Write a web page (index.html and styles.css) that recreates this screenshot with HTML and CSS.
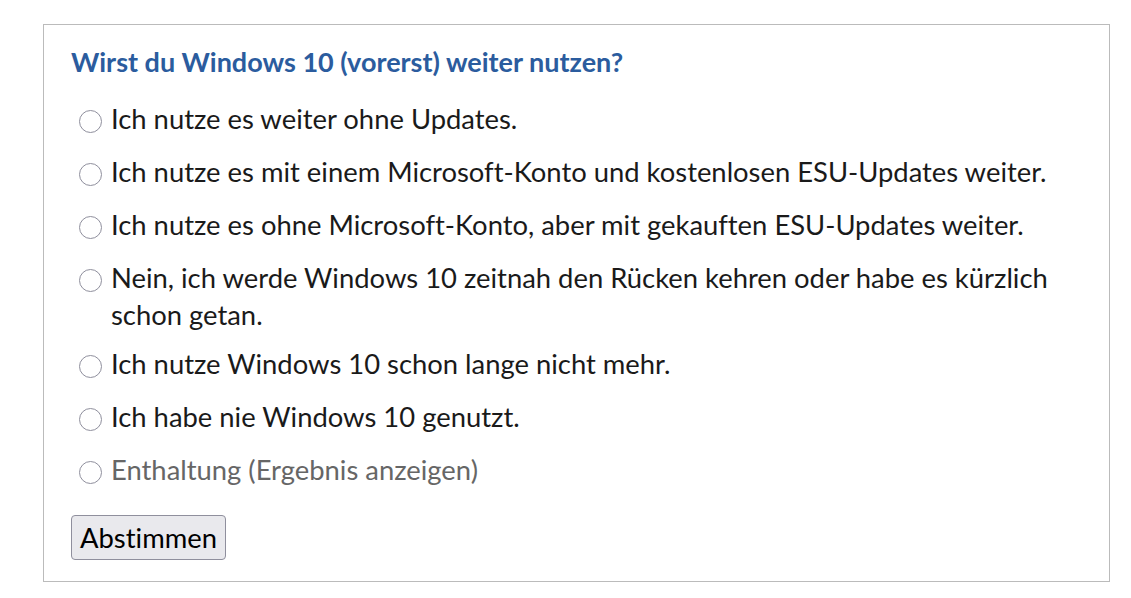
FILE: index.html
```html
<!DOCTYPE html>
<html lang="de">
<head>
<meta charset="utf-8">
<title>Umfrage</title>
<link rel="stylesheet" href="styles.css">
</head>
<body>
<form class="poll">
  <h2 class="poll-title">Wirst du Windows 10 (vorerst) weiter nutzen?</h2>
  <ul class="poll-options">
    <li><label class="option"><input type="radio" name="a" class="radio"><span>Ich nutze es weiter ohne Updates.</span></label></li>
    <li><label class="option"><input type="radio" name="a" class="radio"><span>Ich nutze es mit einem Microsoft-Konto und kostenlosen ESU-Updates weiter.</span></label></li>
    <li><label class="option"><input type="radio" name="a" class="radio"><span>Ich nutze es ohne Microsoft-Konto, aber mit gekauften ESU-Updates weiter.</span></label></li>
    <li><label class="option"><input type="radio" name="a" class="radio"><span>Nein, ich werde Windows 10 zeitnah den Rücken kehren oder habe es kürzlich schon getan.</span></label></li>
    <li><label class="option"><input type="radio" name="a" class="radio"><span>Ich nutze Windows 10 schon lange nicht mehr.</span></label></li>
    <li><label class="option"><input type="radio" name="a" class="radio"><span>Ich habe nie Windows 10 genutzt.</span></label></li>
    <li><label class="option abstain"><input type="radio" name="a" class="radio"><span>Enthaltung (Ergebnis anzeigen)</span></label></li>
  </ul>
  <button type="button" class="vote">Abstimmen</button>
</form>
</body>
</html>
```
FILE: styles.css
```css
html, body {
  margin: 0;
  padding: 0;
  background: #fff;
}
body {
  padding: 24px 0 0 43px;
  font-family: Lato, "Noto Sans", sans-serif;
  font-variant-ligatures: none;
}
.poll {
  box-sizing: border-box;
  width: 1067px;
  height: 558px;
  border: 1px solid #bbbbbb;
  padding: 18px 27px 0 27px;
}
.poll-title {
  margin: 0;
  font-size: 27px;
  line-height: 38px;
  font-weight: 700;
  color: #2b5c9e;
}
.poll-options {
  list-style: none;
  margin: 20px 0 0 0;
  padding: 0;
}
.poll-options li {
  margin: 0 0 13px 0;
}
.poll-options li:last-child {
  margin-bottom: 0;
}
.option {
  display: flex;
  align-items: flex-start;
  gap: 9px;
  font-size: 27.4px;
  line-height: 36.7px;
  color: #1a1a1a;
}
.abstain {
  color: #666666;
}
.radio {
  appearance: none;
  -webkit-appearance: none;
  flex: none;
  box-sizing: border-box;
  width: 23px;
  height: 23px;
  margin: 8.5px 0 8.5px 8px;
  border: 1.5px solid #8f8f9d;
  border-radius: 50%;
  background: #fff;
}
.vote {
  display: block;
  margin-top: 22.6px;
  width: 155px;
  height: 45px;
  font-family: inherit;
  font-variant-ligatures: none;
  font-size: 27.4px;
  color: #000;
  background: #e9e9ed;
  border: 1px solid #8f8f9d;
  border-radius: 4px;
  padding: 0;
}
```
